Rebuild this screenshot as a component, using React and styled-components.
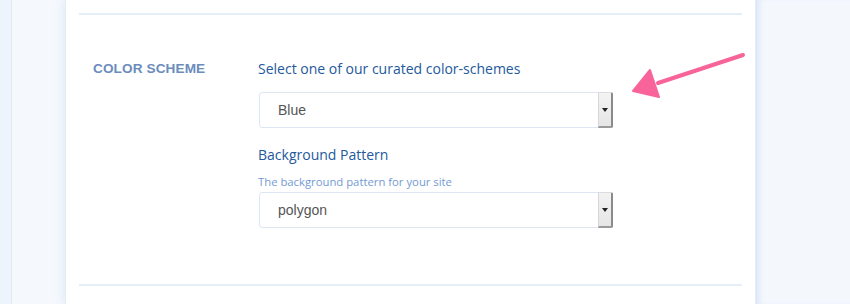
import React from 'react';
import styled, { createGlobalStyle } from 'styled-components';

const GlobalStyle = createGlobalStyle`
    html, body {
        margin: 0;
        padding: 0;
        background: #f4f8fd;
        overflow: hidden;
    }
`;

const Page = styled.div`
    display: flex;
    height: 304px;
    width: 850px;
    position: relative;
`;

const Rail = styled.div`
    width: 11px;
    background: #eef4fc;
    border-right: 1px solid #dfe8f4;
`;

const Gutter = styled.div`
    width: 53px;
    background: #f5f9fd;
`;

const Card = styled.div`
    width: 663px;
    padding: 0 13px;
    background: #fff;
    border-left: 1px solid #e3ebf6;
    border-right: 1px solid #e3ebf6;
    box-shadow: 0 0 10px rgba(160, 185, 220, 0.35);
    display: flex;
    flex-direction: column;
`;

const Divider = styled.hr`
    margin: ${(p) => p.$top || 0}px 0 0;
    border: 0;
    border-top: 2px solid #e6eef8;
    height: 0;
`;

const Section = styled.div`
    display: flex;
    padding: 44px 0 0 14px;
    height: 225px;
`;

const Label = styled.div`
    width: 165px;
    font-family: 'Liberation Sans', Arial, sans-serif;
    font-weight: 700;
    font-size: 13.6px;
    color: #6b8cbd;
    letter-spacing: 0.1px;
    line-height: 20px;
`;

const Fields = styled.div`
    display: flex;
    flex-direction: column;
    width: 355px;
`;

const Title = styled.div`
    font-family: 'Open Sans', sans-serif;
    font-size: 14px;
    color: #24599c;
    line-height: 20px;
    margin-bottom: ${(p) => p.$gap}px;
`;

const Help = styled.div`
    font-family: 'Open Sans', sans-serif;
    font-size: 11.3px;
    color: #739ad4;
    line-height: 14px;
    margin-bottom: 3px;
`;

const Select = styled.div`
    box-sizing: border-box;
    height: 36px;
    display: flex;
    align-items: center;
    justify-content: space-between;
    border: 1px solid #dde7f4;
    border-radius: 3px;
    margin-left: 1px;
    margin-bottom: ${(p) => p.$gap || 0}px;
    font-family: 'Liberation Sans', Arial, sans-serif;
    font-size: 14px;
    color: #555;
    padding-left: 18px;
    background: #fff;
`;

const Spinner = styled.span`
    box-sizing: border-box;
    width: 15px;
    height: 36px;
    margin-right: -1px;
    background: linear-gradient(#f3f3f3, #e6e6e6);
    border-left: 1px solid #d6d6d6;
    border-right: 2px solid #8a8a8a;
    border-bottom: 2px solid #9a9a9a;
    border-top: 1px solid #dcdcdc;
    border-radius: 0 2px 2px 0;
    display: flex;
    align-items: center;
    justify-content: center;
    &::after {
        content: '';
        border-left: 3px solid transparent;
        border-right: 3px solid transparent;
        border-top: 4px solid #222;
    }
`;

const Rest = styled.div`
    flex: 1;
    background: #f4f8fd;
    box-shadow: inset 6px 0 6px -4px rgba(170, 195, 230, 0.45);
`;

const Pointer = styled.svg`
    position: absolute;
    left: 620px;
    top: 40px;
`;

const App = () => {
    return (
        <Page>
            <GlobalStyle />
            <Rail />
            <Gutter />
            <Card>
                <Divider $top={13} />
                <Section>
                    <Label>COLOR SCHEME</Label>
                    <Fields>
                        <Title $gap={13}>Select one of our curated color-schemes</Title>
                        <Select $gap={17}>
                            Blue
                            <Spinner />
                        </Select>
                        <Title $gap={10}>Background Pattern</Title>
                        <Help>The background pattern for your site</Help>
                        <Select>
                            polygon
                            <Spinner />
                        </Select>
                    </Fields>
                </Section>
                <Divider />
            </Card>
            <Rest />
            <Pointer width="140" height="70" viewBox="0 0 140 70">
                <path d="M123 15 L38 43" stroke="#f8649a" strokeWidth="4" strokeLinecap="round" />
                <path d="M13 51 L30 30 L39 57 Z" fill="#f8649a" stroke="#f8649a" strokeWidth="2" strokeLinejoin="round" />
            </Pointer>
        </Page>
    );
};

export default App;
